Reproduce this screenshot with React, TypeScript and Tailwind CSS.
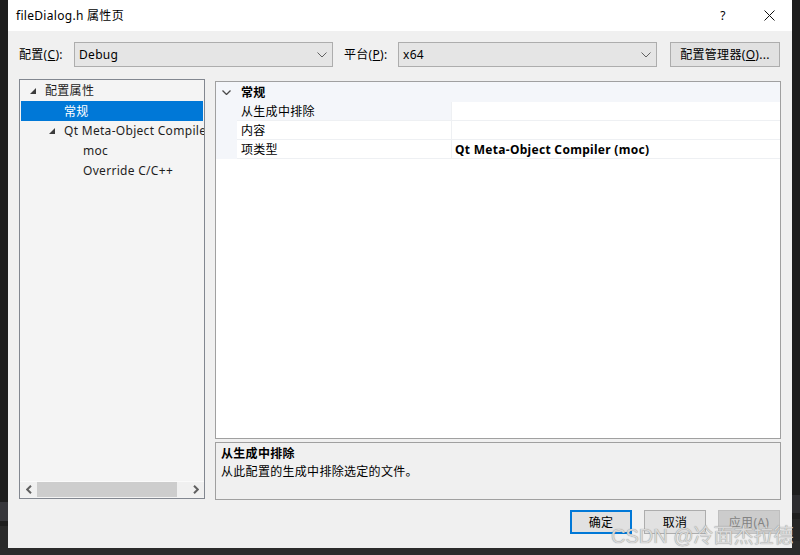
import React from "react";

const TreeTri = () => (
  <svg width="6" height="6" viewBox="0 0 6 6" className="shrink-0">
    <polygon points="6,0 6,6 0,6" fill="#3c3c3c" />
  </svg>
);

const SelChevron = () => (
  <svg width="10" height="6" viewBox="0 0 10 6" className="shrink-0">
    <polyline points="0.5,0.5 5,5 9.5,0.5" fill="none" stroke="#606060" strokeWidth="1" />
  </svg>
);

function Select({ value }: { value: string }) {
  return (
    <div className="w-[259px] h-[25px] bg-[#e5e5e5] border border-[#adadad] flex items-center pl-[4px] pr-[5px]">
      <span className="flex-1 pt-[1px]">{value}</span>
      <SelChevron />
    </div>
  );
}

function Btn({ children, primary, disabled }: { children: React.ReactNode; primary?: boolean; disabled?: boolean }) {
  return (
    <div
      className={
        "w-[62px] h-[24px] flex items-center justify-center pt-[1px] " +
        (primary
          ? "bg-[#e1e1e1] border-2 border-[#0078d7] text-black"
          : disabled
          ? "bg-[#cccccc] border border-[#bfbfbf] text-[#838383]"
          : "bg-[#e1e1e1] border border-[#adadad] text-black")
      }
    >
      {children}
    </div>
  );
}

export default function App() {
  return (
    <div className="relative w-[800px] h-[555px] bg-[#1e1e1e] flex overflow-hidden font-['Segoe_UI','Noto_Sans','Noto_Sans_CJK_SC',sans-serif] text-[12px] leading-[16px] tracking-[0.3px] text-black">
      {/* left dark strip */}
      <div className="w-[8px] h-full flex flex-col">
        <div className="h-[502px] bg-[#1e1e1e]" />
        <div className="h-[19px] bg-[#37373b]" />
        <div className="h-[5px] bg-[#1e1e1e]" />
        <div className="h-[21px] bg-[#2a2a2a]" />
        <div className="flex-1 bg-[#2b2b2b]" />
      </div>

      {/* dialog column */}
      <div className="w-[784px] h-full flex flex-col">
        <div className="h-[548px] bg-[#f0f0f0] flex flex-col">
          {/* title bar */}
          <div className="h-[31px] bg-white flex items-center pl-[8px]">
            <span className="text-[12px]">fileDialog.h 属性页</span>
            <div className="ml-auto flex h-full">
              <div className="w-[46px] h-full flex items-center justify-center text-[12px]">?</div>
              <div className="w-[46px] h-full flex items-center justify-center">
                <svg width="11" height="11" viewBox="0 0 11 11">
                  <path d="M0.5 0.5 L10.5 10.5 M10.5 0.5 L0.5 10.5" stroke="#111" strokeWidth="1" />
                </svg>
              </div>
            </div>
          </div>

          {/* toolbar */}
          <div className="mt-[11px] h-[25px] flex items-center pl-[11px]">
            <span className="w-[55px] pt-[1px]">
              配置(<span className="underline">C</span>):
            </span>
            <Select value="Debug" />
            <span className="ml-[11px] w-[54px] pt-[1px]">
              平台(<span className="underline">P</span>):
            </span>
            <Select value="x64" />
            <div className="ml-[13px] w-[110px] h-[25px] bg-[#e1e1e1] border border-[#adadad] flex items-center justify-center pt-[1px]">
              配置管理器(<span className="underline">O</span>)...
            </div>
          </div>

          {/* main */}
          <div className="mt-[12px] flex pl-[11px] gap-[10px]">
            {/* tree panel */}
            <div className="w-[186px] h-[420px] border border-[#828790] bg-[#f4f4f4] flex flex-col">
              <div className="flex-1 pt-[1px] px-[1px] text-[#1e1e1e] overflow-hidden whitespace-nowrap">
                <div className="h-[20px] flex items-center pl-[9px]">
                  <TreeTri />
                  <span className="ml-[9px]">配置属性</span>
                </div>
                <div className="h-[20px] flex items-center pl-[43px] pt-[1px] bg-[#0078d7] text-white">常规</div>
                <div className="h-[20px] flex items-center pl-[28px]">
                  <TreeTri />
                  <span className="ml-[9px]">Qt Meta-Object Compiler</span>
                </div>
                <div className="h-[20px] flex items-center pl-[62px]">moc</div>
                <div className="h-[20px] flex items-center pl-[62px]">Override C/C++</div>
              </div>
              <div className="h-[16px] mb-[1px] border-t border-[#fafafa] flex items-center bg-[#f0f0f0]">
                <div className="w-[17px] h-full flex items-center justify-center">
                  <svg width="6" height="9" viewBox="0 0 6 9">
                    <polyline points="5,0.8 1.2,4.5 5,8.2" fill="none" stroke="#606060" strokeWidth="2" />
                  </svg>
                </div>
                <div className="w-[140px] h-full bg-[#cdcdcd]" />
                <div className="flex-1" />
                <div className="w-[17px] h-full flex items-center justify-center">
                  <svg width="6" height="9" viewBox="0 0 6 9">
                    <polyline points="1,0.8 4.8,4.5 1,8.2" fill="none" stroke="#606060" strokeWidth="2" />
                  </svg>
                </div>
              </div>
            </div>

            {/* right column */}
            <div className="mt-[2px] w-[566px] flex flex-col gap-[3px]">
              <div className="h-[358px] border border-[#a0a0a0] bg-white flex flex-col whitespace-nowrap">
                <div className="h-[20px] bg-[#f4f6fa] flex items-center">
                  <div className="w-[21px] flex items-center justify-center">
                    <svg width="9" height="5" viewBox="0 0 9 5">
                      <polyline points="0.5,0.5 4.5,4.5 8.5,0.5" fill="none" stroke="#4a4a4a" strokeWidth="1.3" />
                    </svg>
                  </div>
                  <span className="pl-[4px] pt-[1px] font-bold">常规</span>
                </div>
                {[
                  { n: "从生成中排除", v: "", sel: true },
                  { n: "内容", v: "", sel: false },
                  { n: "项类型", v: "Qt Meta-Object Compiler (moc)", sel: false },
                ].map((r) => (
                  <div key={r.n} className="h-[19px] flex">
                    <div className="w-[21px] bg-[#f4f6fa]" />
                    <div
                      className={
                        "w-[215px] flex items-center pl-[4px] pt-[2px] border-b border-r border-[#eef0f3] " +
                        (r.sel ? "bg-[#f4f6fa]" : "bg-white")
                      }
                    >
                      {r.n}
                    </div>
                    <div className="flex-1 flex items-center pl-[3px] pt-[2px] border-b border-[#eef0f3] font-bold">{r.v}</div>
                  </div>
                ))}
              </div>
              <div className="h-[58px] border border-[#a0a0a0] bg-[#f0f0f0] px-[5px] pt-[2px] leading-[18px]">
                <div className="font-bold">从生成中排除</div>
                <div>从此配置的生成中排除选定的文件。</div>
              </div>
            </div>
          </div>

          {/* buttons */}
          <div className="mt-[10px] flex justify-end pr-[12px] gap-[12px]">
            <Btn primary>确定</Btn>
            <Btn>取消</Btn>
            <Btn disabled>应用(A)</Btn>
          </div>
        </div>
        <div className="flex-1 bg-[#2b2b2b]" />
      </div>

      {/* right dark strip */}
      <div className="w-[8px] h-full flex flex-col">
        <div className="h-[495px] bg-[#1e1e1e]" />
        <div className="h-[18px] bg-[#2d2d30]" />
        <div className="h-[6px] bg-[#1e1e1e]" />
        <div className="h-[22px] bg-[#262626]" />
        <div className="flex-1 bg-[#2b2b2b]" />
      </div>

      {/* watermark */}
      <div className="absolute left-[611px] top-[525px] text-[20px] leading-[22px] tracking-normal text-[#d8d8d8] [text-shadow:0_0_1px_#7a7a7a] font-['Liberation_Sans','Noto_Sans_CJK_SC',sans-serif] whitespace-nowrap">
        CSDN @冷面杰拉德
      </div>
    </div>
  );
}
